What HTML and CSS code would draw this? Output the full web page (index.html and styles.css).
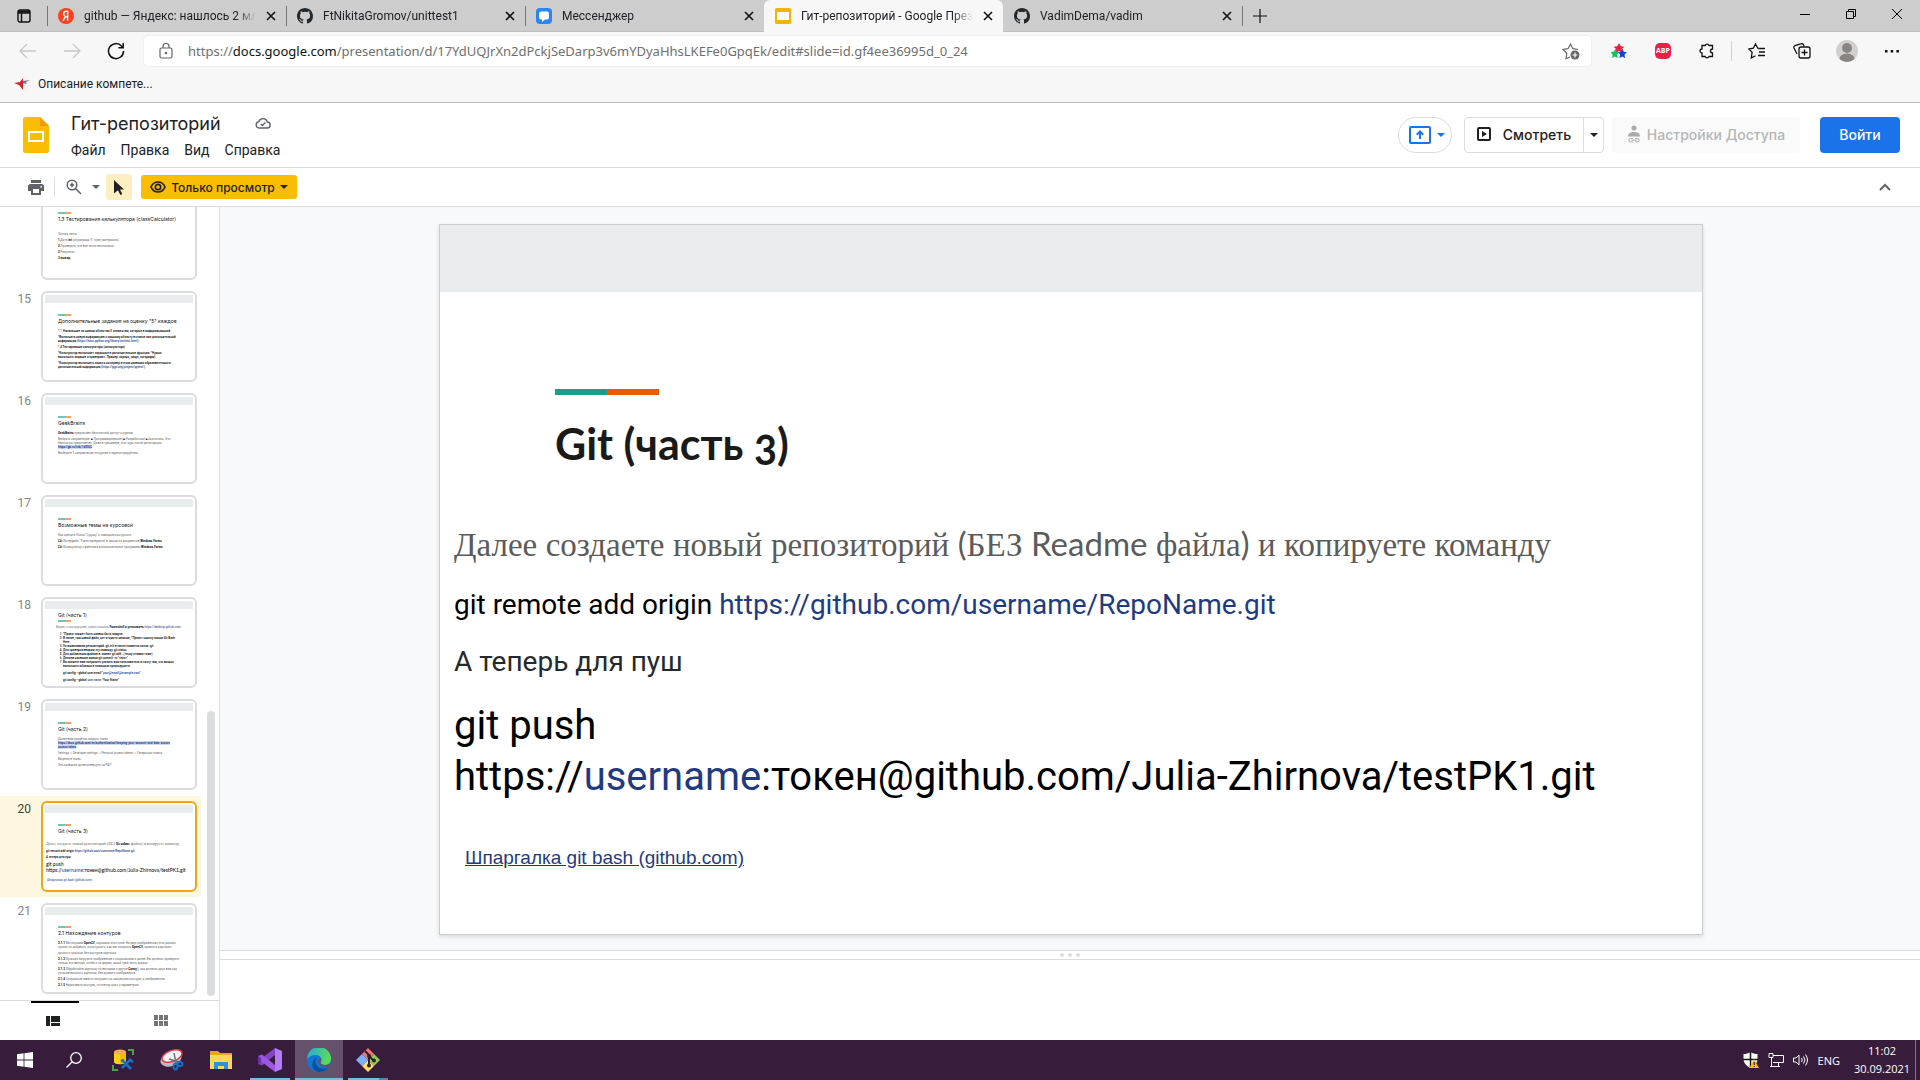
FILE: index.html
```html
<!DOCTYPE html>
<html lang="ru">
<head>
<meta charset="utf-8">
<title>Гит-репозиторий - Google Презентации</title>
<link rel="stylesheet" href="styles.css">
</head>
<body>
<svg class="defs" aria-hidden="true">
  <symbol id="i-x" viewBox="0 0 10 10"><path d="M1 1l8 8M9 1l-8 8" stroke="#111" stroke-width="1.6"/></symbol>
  <symbol id="i-caret" viewBox="0 0 8 4"><path d="M0 0h8L4 4z" fill="currentColor"/></symbol>
  <symbol id="i-github" viewBox="0 0 16 16"><path fill="#24292e" fill-rule="evenodd" d="M8 0C3.58 0 0 3.58 0 8c0 3.54 2.29 6.53 5.47 7.59.4.07.55-.17.55-.38 0-.19-.01-.82-.01-1.49-2.01.37-2.53-.49-2.69-.94-.09-.23-.48-.94-.82-1.13-.28-.15-.68-.52-.01-.53.63-.01 1.08.58 1.23.82.72 1.21 1.87.87 2.33.66.07-.52.28-.87.51-1.07-1.78-.2-3.64-.89-3.64-3.95 0-.87.31-1.59.82-2.15-.08-.2-.36-1.02.08-2.12 0 0 .67-.21 2.2.82a7.6 7.6 0 0 1 4 0c1.53-1.04 2.2-.82 2.2-.82.44 1.1.16 1.92.08 2.12.51.56.82 1.27.82 2.15 0 3.07-1.87 3.75-3.65 3.95.29.25.54.73.54 1.48 0 1.07-.01 1.93-.01 2.2 0 .21.15.46.55.38A8.01 8.01 0 0 0 16 8c0-4.42-3.58-8-8-8z"/></symbol>
</svg>

<nav class="tabs">
  <button class="tab-actions" aria-label="Меню вкладок"><svg width="14" height="14" viewBox="0 0 14 14" fill="none" stroke="#111" stroke-width="1.4"><rect x="1" y="1" width="12" height="12" rx="2"/><path d="M1 4h12M4.5 4v9" /><path d="M1 2.6h12" stroke-width="2"/></svg></button>
  <div class="tab"><svg width="16" height="16" viewBox="0 0 16 16"><circle cx="8" cy="8" r="8" fill="#fc3f1d"/><path d="M9.6 12.8V3.2H8.4c-1.9 0-2.8 1-2.8 2.5 0 1.3.6 2 1.7 2.8l-2.2 4.3M9 8.8H7.6" fill="none" stroke="#fff" stroke-width="1.5"/></svg><span class="tab-title">github — Яндекс: нашлось 2 мл</span><button class="tab-close" aria-label="Закрыть"><svg width="10" height="10"><use href="#i-x"/></svg></button></div>
  <div class="tab"><svg width="16" height="16"><use href="#i-github"/></svg><span class="tab-title">FtNikitaGromov/unittest1</span><button class="tab-close" aria-label="Закрыть"><svg width="10" height="10"><use href="#i-x"/></svg></button></div>
  <div class="tab"><svg width="16" height="16" viewBox="0 0 16 16"><rect width="16" height="16" rx="4" fill="#2787f5"/><path d="M5 3.5h6a2 2 0 0 1 2 2v4a2 2 0 0 1-2 2H9L6 14v-2.500H5a2 2 0 0 1-2-2v-4a2 2 0 0 1 2-2z" fill="#fff"/></svg><span class="tab-title">Мессенджер</span><button class="tab-close" aria-label="Закрыть"><svg width="10" height="10"><use href="#i-x"/></svg></button></div>
  <div class="tab tab-active"><svg width="16" height="16" viewBox="0 0 16 16"><rect width="16" height="16" rx="1.500" fill="#f4b400"/><rect x="2" y="4" width="12" height="8" fill="#fff"/></svg><span class="tab-title">Гит-репозиторий - Google През</span><button class="tab-close" aria-label="Закрыть"><svg width="10" height="10"><use href="#i-x"/></svg></button></div>
  <div class="tab tab-last"><svg width="16" height="16"><use href="#i-github"/></svg><span class="tab-title">VadimDema/vadim</span><button class="tab-close" aria-label="Закрыть"><svg width="10" height="10"><use href="#i-x"/></svg></button></div>
  <button class="new-tab" aria-label="Новая вкладка"><svg width="14" height="14" viewBox="0 0 14 14"><path d="M7 0v14M0 7h14" stroke="#111" stroke-width="1.200"/></svg></button>
  <div class="window-buttons">
    <button aria-label="Свернуть"><svg width="10" height="10"><path d="M0 5.500h10" stroke="#000"/></svg></button>
    <button aria-label="Развернуть"><svg width="10" height="10" fill="none" stroke="#000"><path d="M.5 2.500h7v7h-7zM2.500 2.500v-2h7v7h-2"/></svg></button>
    <button aria-label="Закрыть окно"><svg width="10" height="10"><path d="M0 0l10 10M10 0L0 10" stroke="#000"/></svg></button>
  </div>
</nav>

<div class="browser-bar">
  <button class="nav-button" aria-label="Назад"><svg width="18" height="16" viewBox="0 0 18 16" fill="none" stroke="#c8c8c8" stroke-width="1.300"><path d="M17 8H1M8 1L1 8l7 7"/></svg></button>
  <button class="nav-button" aria-label="Вперёд"><svg width="18" height="16" viewBox="0 0 18 16" fill="none" stroke="#c8c8c8" stroke-width="1.300"><path d="M1 8h16M10 1l7 7-7 7"/></svg></button>
  <button class="nav-button" aria-label="Обновить"><svg width="18" height="18" viewBox="0 0 18 18" fill="none" stroke="#111" stroke-width="1.500"><path d="M16.500 9A7.500 7.500 0 1 1 14.500 4L16 5.500M16.200 1v4.800h-4.800"/></svg></button>
  <div class="address">
    <svg width="14" height="16" viewBox="0 0 14 16" fill="none" stroke="#666" stroke-width="1.200"><rect x="1" y="5" width="12" height="10" rx="1.500"/><path d="M4 5V3.500a3 3 0 0 1 6 0V5"/><circle cx="7" cy="10" r=".7" fill="#666"/></svg>
    <div class="url" role="textbox" aria-label="Адрес">https://<span class="host">docs.google.com</span>/presentation/d/17YdUQJrXn2dPckjSeDarp3v6mYDyaHhsLKEFe0GpqEk/edit#slide=id.gf4ee36995d_0_24</div>
    <button aria-label="Добавить в избранное"><svg width="18" height="18" viewBox="0 0 18 18" fill="none" stroke="#666" stroke-width="1.200"><path d="M8 15l-4 1.800.8-5.300L1 7.500l5-.8L8.500 2l2.300 4.700 5.200.8"/><circle cx="13" cy="13" r="4.500" fill="#666" stroke="none"/><path d="M13 10.500v5M10.500 13h5" stroke="#fff"/></svg></button>
  </div>
  <button class="nav-button" aria-label="Расширение"><svg width="16" height="16" viewBox="0 0 16 16"><path d="M8 0l1.700 3.300 3.600.5-2.600 2.500.7 3.600L8 8 4.600 9.900l.7-3.600L2.700 3.800l3.600-.5z" fill="#e6203c"/><path d="M4.500 5.500l1 3.500 3 .3-2.300 2.200.5 3.700L4 13.500 1.300 15l.3-3L0 9 3 8.500z" fill="#14c458"/><path d="M11.500 5.500l1.200 3.300 3.300.5-2.500 2.300.6 3.600-2.800-1.700-2.800 1.500.5-3.500L7 9.300l3-.4z" fill="#1443d0"/></svg></button>
  <button class="nav-button" aria-label="ABP"><span class="abp">ABP</span></button>
  <button class="nav-button" aria-label="Расширения"><svg width="16" height="16" viewBox="0 0 16 16" fill="none" stroke="#111" stroke-width="1.300"><path d="M3 2.500h3.200a2 2 0 0 1 3.800 0h3.500V6a2 2 0 0 0 0 4v3.500H10a2 2 0 0 1-3.800 0H3V10a2 2 0 0 1 0-4z"/></svg></button>
  <span class="bar-line"></span>
  <button class="nav-button nav-wide" aria-label="Избранное"><svg width="18" height="16" viewBox="0 0 18 16" fill="none" stroke="#111" stroke-width="1.300"><path d="M12 5.400l-2.200-.2L7.500 1 5.300 5.200.8 6l3.300 3.300L3.300 15l4.200-2.300M10 5.500h7M11 9h6M10 12.500h7"/></svg></button>
  <button class="nav-button nav-wide" aria-label="Коллекции"><svg width="18" height="16" viewBox="0 0 18 16" fill="none" stroke="#111" stroke-width="1.300"><path d="M4 11L1 5a2 2 0 0 1 1-2.500L8 .8a2 2 0 0 1 2.500 1L11 3"/><rect x="6" y="4" width="11" height="11" rx="2"/><path d="M11.500 6.500v6M8.500 9.500h6"/></svg></button>
  <button class="nav-button nav-wide" aria-label="Профиль"><svg width="22" height="22" viewBox="0 0 22 22"><circle cx="11" cy="11" r="11" fill="#d2d0ce"/><circle cx="11" cy="8" r="5" fill="#8a8583"/><path d="M3.500 19a7.500 5.500 0 0 1 15 0 11 11 0 0 1-15 0z" fill="#8a8583"/></svg></button>
  <button class="nav-button nav-wide" aria-label="Ещё"><svg width="14" height="4" viewBox="0 0 14 4"><path d="M0 1h2.500v2.500H0zM5.700 1h2.500v2.500H5.700zM11.400 1h2.500v2.500h-2.500z" fill="#111"/></svg></button>
</div>

<div class="bookmarks">
  <a class="bookmark" href="#"><svg width="16" height="12" viewBox="0 0 16 12"><path d="M0 5l6-1 3-4v12L5 7z" fill="#d8232e"/><path d="M9 3l7-1-4 2 .5 2L9 5z" fill="#6d7698"/></svg>Описание компете...</a>
</div>

<header class="doc-header">
  <svg class="doc-logo" width="26" height="36" viewBox="0 0 26 36"><path d="M2.500 0H17l9 9v24.500a2.500 2.500 0 0 1-2.500 2.500h-21A2.500 2.500 0 0 1 0 33.500v-31A2.500 2.500 0 0 1 2.500 0z" fill="#fbbc04"/><path d="M17 0l9 9h-9z" fill="#f29900"/><rect x="6" y="15" width="14" height="9" fill="none" stroke="#fff" stroke-width="2"/></svg>
  <div class="doc-info">
    <div class="doc-title-row">
      <input class="doc-title" type="text" value="Гит-репозиторий" aria-label="Название">
      <svg width="16" height="12" viewBox="0 0 16 12" fill="none" stroke="#5f6368" stroke-width="1.400"><path d="M4 11a3.200 3.200 0 0 1-.3-6.300A4.500 4.500 0 0 1 12.300 5 3 3 0 0 1 12 11z"/><path d="M5.700 7l1.700 1.500L10.300 5.500"/></svg>
    </div>
    <div class="menu"><button>Файл</button><button>Правка</button><button>Вид</button><button>Справка</button></div>
  </div>
  <button class="present-to" aria-label="Показать на встрече"><svg width="22" height="18" viewBox="0 0 22 18"><rect x="1" y="1" width="20" height="16" rx="1" fill="none" stroke="#1a73e8" stroke-width="2"/><path d="M11 13V6M7.800 8.700L11 5.500l3.200 3.200" fill="none" stroke="#1a73e8" stroke-width="2"/></svg><svg width="8" height="4"><use href="#i-caret"/></svg></button>
  <div class="view-group">
    <button class="view-main"><svg width="14" height="14" viewBox="0 0 14 14"><rect x="1" y="1" width="12" height="12" rx="1" fill="none" stroke="#202124" stroke-width="2"/><path d="M5 4l5 3-5 3z" fill="#202124"/></svg>Смотреть</button>
    <button class="view-more" aria-label="Варианты просмотра"><svg width="8" height="4"><use href="#i-caret"/></svg></button>
  </div>
  <button class="share" disabled><svg width="14" height="18" viewBox="0 0 14 18" fill="#a8aaad"><circle cx="7" cy="3" r="2.500"/><path d="M1 11.500C1 8 4 7 7 7s6 1 6 4.500z"/><path d="M6 13.500H3.500a1.700 1.700 0 0 0 0 3.400H6M8 13.500h2.500a1.700 1.700 0 0 1 0 3.400H8M4.500 15.200h5" fill="none" stroke="#a8aaad"/></svg>Настройки Доступа</button>
  <button class="sign-in">Войти</button>
</header>

<div class="toolbar">
  <button class="tool" aria-label="Печать"><svg width="16" height="15" viewBox="0 0 16 15" fill="#5f6368"><path d="M3 0h10v3H3zM2.500 4h11A2.500 2.500 0 0 1 16 6.500V11h-3v4H3v-4H0V6.500A2.500 2.500 0 0 1 2.500 4zM5 9v4h6V9zM12.500 6v1.500H14V6z" fill-rule="evenodd"/></svg></button>
  <span class="tool-line"></span>
  <button class="tool zoom-tool" aria-label="Масштаб"><svg width="16" height="16" viewBox="0 0 16 16" fill="none" stroke="#5f6368" stroke-width="1.500"><circle cx="6" cy="6" r="4.800"/><path d="M9.500 9.500L15 15M6 3.800v4.400M3.800 6h4.400"/></svg><svg width="8" height="4"><use href="#i-caret"/></svg></button>
  <button class="tool pointer" aria-label="Выделение"><svg width="10" height="15" viewBox="0 0 10 15"><path d="M0 0l10 9.500H6l2.300 4.500-2 1L4 10.300 0 13.500z" fill="#202124"/></svg></button>
  <button class="view-only"><svg width="16" height="12" viewBox="0 0 16 12"><path d="M8 1c3.200 0 5.700 2 7 5-1.300 3-3.800 5-7 5S2.300 9 1 6c1.300-3 3.800-5 7-5z" fill="none" stroke="#202124" stroke-width="1.700"/><circle cx="8" cy="6" r="2.700" fill="none" stroke="#202124" stroke-width="1.700"/></svg>Только просмотр<svg width="8" height="4"><use href="#i-caret"/></svg></button>
  <button class="tool collapse" aria-label="Свернуть меню"><svg width="12" height="8" viewBox="0 0 12 8"><path d="M1 7l5-5 5 5" fill="none" stroke="#5f6368" stroke-width="2"/></svg></button>
</div>

<main class="editor">
  <aside class="film">
    <div class="film-body">
      <ol class="film-list">
        <li class="film-row"><span class="num"></span>
          <div class="thumb"><div class="t-text"><i class="t-bar"></i><h3>1.3 Тестирования калькулятора (classCalculator)</h3>
            <p class="t-gap">Логика теста:</p><p><b>1.</b>Дать <b>int</b> (из разряда IT: поле, материалы)</p><p><b>2.</b>Проверить, что все тесты выполнены</p><p><b>3.</b>Результат</p><p><b>3.вывод:</b></p></div></div></li>
        <li class="film-row"><span class="num">15</span>
          <div class="thumb"><div class="t-text t-dark"><i class="t-bar"></i><h3>Дополнительные задания на оценку "5" каждое</h3>
            <p>*.*. Написанное по новым объектам 5 элементам, которые в информационной</p><p>*Выполнить новую информацию к данному объекту в списке или дополнительной<br>информации (<a href="#">https://docs.python.org/library/unittest.html</a>)</p><p>*.4 Тестирование калькулятора (калькулятора)</p><p>*Калькулятор выполняет заданные в дополнительные функции: *Нужно<br>выполнять задание и проверяют. Пример: корень, синус, логарифм)</p><p>*Калькулятор выполнить заказ и на сервер в этом названия образовательного<br>дополнительной информации (<a href="#">https://pypi.org/project/pytest/</a>)</p></div></div></li>
        <li class="film-row"><span class="num">16</span>
          <div class="thumb"><div class="t-text"><i class="t-bar"></i><h3>GeekBrains</h3>
            <p><b>GeekBrains</b> предлагают бесплатный доступ к курсам</p><p>Выбрать направление: <b>■</b> Программирование (<b>■</b> Разработчик) <b>■</b> Аналитика. Это<br>бесплатно представлен. Даже в тренажере, этот курс после регистрации<br><a class="mark" href="#">https://gb.ru/link/1dlDUC</a></p><p>Выберите 1 направление из курсов и зарегистрируйтесь</p></div></div></li>
        <li class="film-row"><span class="num">17</span>
          <div class="thumb"><div class="t-text"><i class="t-bar"></i><h3>Возможные темы на курсовой</h3>
            <p>Как сделать Поиск "Судоку" с помощью контурного</p><p><b>C#:</b> Интерфейс "Учета материала" в одном из документов <b>Windows Forms</b></p><p><b>C#:</b> Калькулятор с файлом в дополнительный программы <b>Windows Forms</b></p></div></div></li>
        <li class="film-row"><span class="num">18</span>
          <div class="thumb"><div class="t-text t-dark t-steps"><h3>Git (часть 1)</h3><i class="t-bar"></i>
            <p class="t-out">Видео: с инструкцией, нужно скачать <b>Powershell и установить</b> <a href="#">https://desktop.github.com</a></p>
            <ol><li>*Проект может быть назван быть модуль</li><li>В папке, там новый файл, нет открыть меньше, *Проект кнопку мыши Git Bash<br>Here</li><li>Устанавливаем репозиторий. git init в папке появится папка .git</li><li>Для проверки вводим эту команду. git status</li><li>Для добавления файлов в. имеют git add . (точку ставим тоже)</li><li>Делаем название имени git commit -m "текст"</li><li>Вы можете вам попросить указать имя пользователя и почту там, что можно<br>выполнить обязаны в помощью предыдущего.</li></ol>
            <p class="t-in">git config --global user.email "<a href="#">your@email@example.com</a>"</p><p class="t-in">git config --global <a href="#">user.name</a> "Your Name"</p></div></div></li>
        <li class="film-row"><span class="num">19</span>
          <div class="thumb"><div class="t-text"><i class="t-bar"></i><h3>Git (часть 2)</h3>
            <p>Далее вам придётся создать токен<br><a class="mark" href="#">https://docs.github.com/en/authentication/keeping-your-account-and-data-secure<br>access-token</a></p><p>Settings -&gt; Developer settings -&gt; Personal access tokens -&gt; Генерация токена</p><p>Выделите токен</p><p>Это название должна вернуть на PAT!</p></div></div></li>
        <li class="film-row film-selected"><span class="num">20</span>
          <div class="thumb"><div class="t-text"><i class="t-bar"></i><h3>Git (часть 3)</h3>
            <div class="t-wide"><p class="t-4">Далее создаете новый репозиторий (БЕЗ <b>Readme</b> файла) и копируете команду</p><p class="t-black">git remote add origin <a href="#">https://github.com/username/RepoName.git</a></p><p class="t-black">А теперь для пуш</p><p class="t-5">git push<br>https://<a href="#">username</a>:токен@github.com/Julia-Zhirnova/testPK1.git</p><p class="t-link"><a href="#">Шпаргалка git bash (github.com)</a></p></div></div></div></li>
        <li class="film-row"><span class="num">21</span>
          <div class="thumb"><div class="t-text"><i class="t-bar"></i><h3>2.1 Нахождение контуров</h3>
            <p><b>2.1.1</b> Мы изучаем <b>OpenCV</b>, научимся этих слов. На двух изображениях этих разных<br>просят их добавить, а контурного, как мы получили <b>OpenCV</b>, сравнить картинки</p><p>одного и границы без контуров картинок</p><p><b>2.1.2</b> Функция загрузить изображение с сохранением и далее. Вы должны проверить<br>только эти методы, чтобы и на форма, какой трей этого экрана</p><p><b>2.1.3</b> Обработайте картинку по выходам и другое <b>Canny</b>(), как должны дана вам ход<br>установленного с картинок, без шумов и изображения</p><p><b>2.1.4</b> Сохранение вместо получают на найденные контуры, к изображению</p><p><b>2.1.5</b> Нарисовать контуры, то повтор цикл с параметром</p></div></div></li>
      </ol>
      <span class="film-scroll"></span>
    </div>
    <div class="film-modes">
      <button class="mode mode-on" aria-label="Лента слайдов"><svg width="14" height="10" viewBox="0 0 14 10" fill="#202124"><path d="M0 0h4v10H0zM5 0h9v6H5zM5 7h9v3H5z"/></svg></button>
      <button class="mode" aria-label="Сетка"><svg width="14" height="11" viewBox="0 0 14 11" fill="#757575"><path d="M0 0h4v5H0zM5 0h4v5H5zM10 0h4v5h-4zM0 6h4v5H0zM5 6h4v5H5zM10 6h4v5h-4z"/></svg></button>
    </div>
  </aside>

  <section class="work">
    <div class="stage">
      <article class="slide">
        <div class="slide-band"></div>
        <div class="slide-accent"></div>
        <h1>Git (часть 3)</h1>
        <p class="s-intro"><span>Далее</span> <span>создаете</span> <span>новый</span> <span>репозиторий</span> (<span>БЕЗ</span> Readme <span>файла</span>) <span>и</span> <span>копируете</span> <span>команду</span></p>
        <p class="s-cmd">git remote add origin <a href="#">https://github.com/username/RepoName.git</a></p>
        <p class="s-cmd s-soft">А теперь для пуш</p>
        <p class="s-push">git push<br>https://<a href="#">username</a>:токен@github.com/Julia-Zhirnova/testPK1.git</p>
        <p class="s-cheat"><a href="#">Шпаргалка git bash (github.com)</a></p>
      </article>
    </div>
    <div class="splitter"><i></i><i></i><i></i></div>
    <div class="notes"></div>
  </section>
</main>

<footer class="taskbar">
  <div class="task-icons">
    <button aria-label="Пуск"><svg width="16" height="16" viewBox="0 0 16 16" fill="#fff"><path d="M0 2.200L6.600 1.300v6.300H0zM7.400 1.200L16 0v7.600H7.400zM0 8.400h6.600v6.300L0 13.800zM7.400 8.400H16V16l-8.600-1.200z"/></svg></button>
    <button aria-label="Поиск"><svg width="16" height="16" viewBox="0 0 16 16" fill="none" stroke="#fff" stroke-width="1.300"><circle cx="10" cy="6" r="5.300"/><path d="M6.200 9.800L.5 15.500"/></svg></button>
    <button aria-label="Инструменты данных"><svg width="22" height="22" viewBox="0 0 22 22"><path d="M2 3v10c0 3 12 3 12 0V3z" fill="#fcd116"/><path d="M8 4v11c4 0 6-.8 6-2V3z" fill="#f5bd00"/><ellipse cx="8" cy="3" rx="6" ry="2.500" fill="#f6ab57"/><path d="M16 1h5v5M1 16v5h5" fill="none" stroke="#47a447" stroke-width="2"/><path d="M10 19l8-8M11 12l8 8M9 12l3-1M17 10l4 3" stroke="#1672c4" stroke-width="2.500"/></svg></button>
    <button aria-label="Ножницы"><svg width="24" height="22" viewBox="0 0 24 22"><ellipse cx="11" cy="10" rx="11" ry="7" transform="rotate(-22 11 10)" fill="#b9b9c4"/><ellipse cx="12" cy="7" rx="10.500" ry="5.500" transform="rotate(-20 12 7)" fill="#f6f6f6" stroke="#d93a40" stroke-width="1.500"/><path d="M14 4l2 10M9 10l10 3" stroke="#68717c" stroke-width="1.400"/><ellipse cx="15.500" cy="17.500" rx="2" ry="3" fill="none" stroke="#1672c4" stroke-width="2"/><ellipse cx="20" cy="15" rx="2.500" ry="2" fill="none" stroke="#1672c4" stroke-width="2"/></svg></button>
    <button aria-label="Проводник"><svg width="22" height="18" viewBox="0 0 22 18"><path d="M0 0h8l2 2h12v16H0z" fill="#e7a51c"/><path d="M0 4h22v14H0z" fill="#ffd65c"/><path d="M4 18v-7h14v7h-4v-3H8v3z" fill="#2f8fdd"/></svg></button>
    <button class="running" aria-label="Visual Studio"><svg width="24" height="24" viewBox="0 0 24 24"><path d="M17 0l7 3v18l-7 3z" fill="#b27cf5"/><path d="M17 0v7L4 17.500 0 16v-3z" fill="#8544c6"/><path d="M17 24v-7L4 6.500 0 8v3z" fill="#9b57de"/><path d="M0 8l3 2v5l-3 1z" fill="#6d2fac"/></svg></button>
    <button class="running current" aria-label="Microsoft Edge"><svg width="24" height="24" viewBox="0 0 24 24"><defs><linearGradient id="eg" x2="1" y2=".3"><stop stop-color="#2aa5e0"/><stop offset="1" stop-color="#57dc5a"/></linearGradient></defs><circle cx="12" cy="12" r="12" fill="#0f78d4"/><path d="M0 11a12 12 0 0 1 24 0c0 4-3 6-6 6-2.500 0-4.500-1-4.500-2.500 0-1 1-1.300 1-3C14.500 9 12 7 8.500 7 4.500 7 1.300 9 0 11z" fill="url(#eg)"/><path d="M10 9c-3 3-2 9 3 11 3 1.200 6.500.8 9-1.500A12 12 0 0 1 12 24C7 23 4.500 19 5.500 15 6 12 8 10 10 9z" fill="#0b4f9e"/><path d="M13.500 14.500c0 1.500 2 2.500 4.500 2.500 2 0 4-.9 5.100-2.200A12 12 0 0 1 22 18.400C17 20 11 18.500 11 13c.5-2 2-3 3-2.500.8 1.500-.5 3-.5 4z" fill="#65516b"/></svg></button>
    <button class="running stacked" aria-label="Git Bash"><svg width="24" height="24" viewBox="0 0 24 24"><path d="M12 0l6 6-6 6-6-6z" fill="#f47377"/><path d="M6 6l6 6-6 6-6-6z" fill="#7cb0f8"/><path d="M18 6l6 6-6 6-6-6z" fill="#8fce55"/><path d="M12 12l6 6-6 6-6-6z" fill="#fbdc71"/><path d="M9 3l4 4v11M13 8l5 5" stroke="#33202a" stroke-width="2" fill="none"/><circle cx="13" cy="8" r="2" fill="#33202a"/><circle cx="18" cy="12.500" r="2" fill="#33202a"/><circle cx="13" cy="17.500" r="2" fill="#33202a"/></svg></button>
  </div>
  <div class="tray">
    <svg width="16" height="16" viewBox="0 0 16 16"><path d="M7.500 0c2 1.500 4.500 2 7 2v5c0 4-3 7-7 9C3.500 14 .5 11 .5 7V2c2.500 0 5-.5 7-2z" fill="#fff"/><path d="M7.500 0v15M0 7.500h15" stroke="#111" stroke-width="1.500"/><path d="M11 7l5 9H6.500z" fill="#f5b921"/><path d="M11.200 10v3M11.200 14v1" stroke="#111"/></svg>
    <svg width="16" height="14" viewBox="0 0 16 14" fill="none" stroke="#fff"><path d="M5 2.500h10.500v7H5M3.500 5v8M1 .5h4v4H1zM10.500 10v3M2 13.500h10"/></svg>
    <svg width="16" height="14" viewBox="0 0 16 14" fill="none" stroke="#fff"><path d="M.5 5v4H3l3 3V2L3 5zM8.500 5q1.500 2 0 4M10.500 3.500q3 3.500 0 7M12.500 1.500q4 5.500 0 11"/></svg>
    <span>ENG</span>
    <time class="clock">11:02<br>30.09.2021</time>
  </div>
</footer>
</body>
</html>
```
FILE: styles.css
```css
* { box-sizing: border-box; }
body {
  margin: 0;
  height: 100vh;
  display: flex;
  flex-direction: column;
  overflow: hidden;
  background: #fff;
  color: #202124;
  font-family: Roboto, sans-serif;
  font-size: 12px;
}
button, input { font: inherit; color: inherit; border: 0; padding: 0; margin: 0; background: none; }
button { display: flex; align-items: center; justify-content: center; }
a { color: inherit; text-decoration: none; }
h1, h3, p, ol { margin: 0; padding: 0; }
svg { flex: none; display: block; }
.defs { position: absolute; width: 0; height: 0; }

/* browser tabs */
.tabs { flex: none; display: flex; height: 32px; background: #cdcdcd; border-bottom: 1px solid #bdbdbd; }
.tab-actions { width: 47px; height: 31px; }
.tab {
  display: flex; align-items: center; gap: 10px;
  flex: 0 1 239px; min-width: 0; height: 31px;
  padding-left: 11px; padding-right: 10px;
  background: linear-gradient(#777, #777) left 6px / 1px 20px no-repeat;
}
.tab-title {
  flex: 1; min-width: 0; overflow: hidden; white-space: nowrap;
  height: 20px; line-height: 20px;
  -webkit-mask-image: linear-gradient(to right, #000 88%, transparent);
  mask-image: linear-gradient(to right, #000 88%, transparent);
}
.tab-active { height: 32px; background: #f7f7f7; border-radius: 6px 6px 0 0; }
.tab-last { background: none; }
.new-tab { width: 36px; height: 31px; background: linear-gradient(#777, #777) left 6px / 1px 20px no-repeat; }
.tab-close { width: 10px; }
.window-buttons { display: flex; margin-left: auto; }
.window-buttons button { width: 46px; height: 28px; }

/* address row */
.browser-bar { flex: none; display: flex; align-items: center; height: 38px; padding: 0 6px; background: #f7f7f7; }
.nav-button { width: 44px; height: 34px; }
.nav-wide { width: 45px; }
.address {
  flex: 1; min-width: 0; display: flex; align-items: center; gap: 15px;
  height: 30px; margin: 0 6px; padding: 0 11px 0 15px;
  background: #fff; border-radius: 4px; box-shadow: 0 0 2px #ddd;
}
.url { flex: 1; min-width: 0; overflow: hidden; white-space: nowrap; color: #6f6f6f; font: 13px/20px "Noto Sans", sans-serif; }
.host { color: #111; }
.abp { display: grid; place-items: center; width: 16px; height: 16px; border-radius: 5px; background: #ed1e45; color: #fff; font: bold 7px/16px "Open Sans", sans-serif; }
.bar-line { width: 1px; height: 20px; background: #d0d0d0; margin: 0 2px; }
.bookmarks { flex: none; display: flex; align-items: center; height: 33px; padding: 0 14px 4px; background: #f7f7f7; border-bottom: 1px solid #bcbcbc; }
.bookmark { display: flex; align-items: center; gap: 8px; line-height: 20px; }

/* document header */
.doc-header { flex: none; display: flex; align-items: center; height: 65px; padding: 0 20px 0 23px; border-bottom: 1px solid #dadce0; font-family: Inter, sans-serif; font-size: 14px; font-weight: 500; }
.doc-info { flex: 1; min-width: 0; padding: 2px 0 0 22px; }
.doc-title-row { display: flex; align-items: center; gap: 24px; }
.doc-title { width: 160px; height: 28px; font-size: 18px; font-weight: 400; }
.menu { display: flex; gap: 15px; font-family: Roboto, sans-serif; font-weight: 400; line-height: 26px; }
.present-to { gap: 6px; width: 54px; height: 36px; padding-left: 4px; border: 1px solid #dadce0; border-radius: 18px; color: #1a73e8; }
.view-group { display: flex; height: 36px; margin: 0 8px 0 12px; border: 1px solid #dadce0; border-radius: 4px; }
.view-main { gap: 12px; width: 118px; padding-bottom: 2px; }
.view-more { width: 20px; border-left: 1px solid #dadce0; }
.share { gap: 6px; width: 188px; height: 36px; margin-right: 20px; padding-bottom: 2px; border-radius: 4px; background: #fafafa; color: #b4b6b8; }
.sign-in { width: 80px; height: 36px; padding-bottom: 2px; border-radius: 4px; background: #1a73e8; color: #fff; }

/* toolbar */
.toolbar { flex: none; display: flex; align-items: center; height: 39px; padding: 0 23px 0 22px; border-bottom: 1px solid #dadce0; font-family: Inter, sans-serif; }
.tool { height: 26px; width: 28px; }
.tool-line { width: 1px; height: 20px; margin: 0 6px 0 4px; background: #dadce0; }
.zoom-tool { width: 45px; gap: 10px; padding-right: 2px; color: #5f6368; }
.pointer { width: 26px; border-radius: 2px; background: #feefc3; }
.view-only { width: 156px; height: 24px; gap: 5px; margin-left: 9px; border-radius: 3px; background: #fbbc04; font-weight: 500; }
.collapse { width: 24px; margin-left: auto; }

/* editor */
.editor { flex: 1; min-height: 0; display: flex; }
.film { flex: none; display: flex; flex-direction: column; width: 220px; border-right: 1px solid #dadce0; }
.film-body { flex: 1; min-height: 0; display: flex; align-items: flex-end; gap: 6px; overflow: hidden; }
.film-list { display: flex; flex-direction: column; gap: 1px; width: 201px; padding-bottom: 1px; list-style: none; }
.film-row { display: flex; gap: 10px; padding: 5px 0; }
.num { width: 31px; text-align: right; color: #80868b; font: 12px/16px Roboto, sans-serif; }
.film-selected { background: #fef7e0; border-radius: 0 4px 4px 0; }
.film-selected .num { color: #3c4043; }
.film-scroll { width: 8px; height: 285px; margin-bottom: 4px; border-radius: 4px; background: #dadce0; }
.thumb { width: 156px; height: 91px; padding: 2px; border: 2px solid #dadce0; border-radius: 6px; background: #fff; overflow: hidden; }
.thumb::before { content: ""; display: block; height: 8px; border-radius: 2px 2px 0 0; background: #e8eced; }
.film-selected .thumb { border-color: #f2a516; }
.t-text { padding: 11px 8px 0 13px; color: #666; font: 3px/4px Roboto, sans-serif; white-space: nowrap; }
.t-bar { display: block; width: 13px; height: 2px; background: linear-gradient(to right, #76c2b6 50%, #f4a06a 50%); }
.t-text h3 { margin: 1px 0 4px; color: #111; font: 5px/8px Inter, sans-serif; }
.t-text p { margin-bottom: 2px; }
.t-text b { color: #111; }
.t-text a { color: #24418e; }
.t-text .mark { background: #cfd9f2; font-weight: 700; }
.t-text .t-gap { margin-top: 9px; }
.t-dark, .t-black { color: #000; font-weight: 500; }
.t-steps { padding-top: 2px; }
.t-text.t-steps h3 { margin: 0 0 1px; }
.t-steps .t-out { margin: 3px 0 3px -2px; color: #777; font-weight: 400; }
.t-steps ol { padding-left: 5px; margin-bottom: 3px; }
.t-steps .t-in { margin-bottom: 3px; padding-left: 5px; }
.t-wide { margin: 6px -8px 0 -12px; }
.t-text .t-4 { font: 4px/5px "Liberation Serif", serif; margin-bottom: 3px; }
.t-text .t-5 { color: #000; font: 5px/6px Lato, sans-serif; margin-bottom: 5px; }
.t-text .t-link { padding-left: 1px; }
.film-modes { flex: none; display: flex; height: 40px; border-top: 1px solid #dadce0; padding-left: 10px; }
.mode { width: 90px; }
.mode-on { padding-right: 4px; background: linear-gradient(#000, #000) center top / 48px 2px no-repeat; }
.mode:last-child { width: 120px; padding-left: 4px; }

.work { flex: 1; min-width: 0; display: flex; flex-direction: column; background: #f8f9fa; }
.stage { flex: 1; min-height: 0; padding: 17px 24px 0 26px; display: flex; justify-content: center; align-items: flex-start; }
.slide { width: 100%; max-width: 1264px; aspect-ratio: 16 / 9; border: 1px solid #ccc; background: #fff; box-shadow: 0 2px 4px #dcdcdc; font-family: Roboto, sans-serif; color: #000; }
.slide-band { height: 67px; background: #e8eced; }
.slide-accent { width: 104px; height: 6px; margin: 97px 0 0 115px; background: linear-gradient(to right, #1c9c8a 50%, #eb5a00 50%); }
.slide h1 { margin: 23px 0 0 115px; color: #1a1a1a; font: bold 43px/52px Lato, sans-serif; font-variant-numeric: oldstyle-nums; }
.slide p { padding-left: 14px; }
.slide a { color: #1f3b80; }
.slide .s-intro { margin-top: 51px; color: #5b5b5b; font: 33px/44px Lato, sans-serif; }
.s-intro span { font-family: "Liberation Serif", serif; }
.s-cmd { margin-top: 19px; font-size: 28px; line-height: 38px; }
.s-soft { color: #24292e; }
.s-push { margin-top: 19px; font-size: 40px; line-height: 51px; }
.slide .s-cheat { margin-top: 44px; padding-left: 25px; font: 19px/24px "Liberation Sans", sans-serif; }
.s-cheat a { text-decoration: underline; }
.splitter { flex: none; display: flex; align-items: center; justify-content: center; gap: 4px; height: 10px; border-top: 1px solid #dadce0; border-bottom: 1px solid #dadce0; background: #fff; }
.splitter i { width: 4px; height: 4px; border-radius: 2px; background: #dadce0; }
.notes { flex: none; height: 80px; background: #fff; }

/* taskbar */
.taskbar { flex: none; display: flex; justify-content: space-between; height: 40px; background: #371d3b; color: #fff; }
.task-icons { display: flex; gap: 1px; padding-left: 1px; }
.task-icons button { width: 48px; height: 40px; }
.running { background: linear-gradient(#76b9ed, #76b9ed) center bottom / 40px 2px no-repeat; }
.current { background: linear-gradient(#76b9ed, #76b9ed) center bottom / 48px 2px no-repeat, #65516b; }
.stacked { background: linear-gradient(to right, #76b9ed 31px, #5785a9 31px) center bottom / 40px 2px no-repeat; }
.tray { display: flex; align-items: center; gap: 9px; margin-right: 4px; border-right: 1px solid #85758a; font-family: "Open Sans", sans-serif; font-size: 11px; }
.clock { width: 66px; text-align: center; line-height: 18px; }
```
